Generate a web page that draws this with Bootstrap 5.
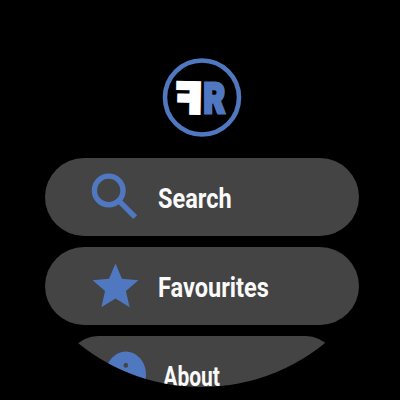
<!DOCTYPE html>
<html lang="en">
<head>
<meta charset="utf-8">
<meta name="viewport" content="width=device-width, initial-scale=1">
<title>Menu</title>
<link href="https://cdn.jsdelivr.net/npm/bootstrap@5.3.0/dist/css/bootstrap.min.css" rel="stylesheet">
<style>
  body { background: #000; font-family: Roboto, "Liberation Sans", sans-serif; }
  /* round watch display */
  .watch { width: 400px; height: 400px; padding: 57px 41.5px 0 45px; background: #000; clip-path: circle(195px at 201.5px 192px); }
  .brand-mark { width: 80px; height: 80px; margin-bottom: 20.5px; margin-left: .7px; }
  .brand-mark text { font: 900 42.5px Roboto, sans-serif; }
  .menu { gap: 10.5px; width: 313.5px; }
  .menu-item { height: 78.5px; padding-left: 39px; border-radius: 39.25px; background: #444; color: #fafafa; }
  .menu-item:hover { color: #fff; }
  .icon-slot { width: 62px; height: 62px; margin-right: 12px; padding-top: 1.5px; color: #5078c0; }
  .menu-label { font-size: 27px; font-weight: 700; line-height: 1; transform: scaleX(.872); transform-origin: left; position: relative; top: 3px; }
  .edge { transform: scaleX(.88); }
  .edge .menu-label { top: 2.5px; transform: scaleX(.885); }
</style>
</head>
<body class="m-0 overflow-hidden">
<main class="watch d-flex flex-column align-items-center overflow-hidden">
  <svg class="brand-mark flex-shrink-0" viewBox="0 0 80 80" role="img" aria-label="FR">
    <circle cx="40" cy="40.5" r="37" fill="none" stroke="#5078c0" stroke-width="4.6"/>
    <text transform="translate(38.9 56.3) rotate(1) scale(-1.04 1)" fill="#fff" stroke="#fff" stroke-width="3.6">F</text>
    <text transform="translate(41.4 56.3) scale(.78 1)" fill="#5078c0" stroke="#5078c0" stroke-width="3.2">R</text>
  </svg>
  <nav class="menu d-flex flex-column flex-shrink-0">
    <a href="#" class="menu-item d-flex align-items-center flex-shrink-0 text-decoration-none">
      <span class="icon-slot d-flex align-items-center justify-content-center flex-shrink-0 pt-0">
        <svg class="flex-shrink-0" width="62" height="62" viewBox="0 0 62 62" fill="none" stroke="currentColor"><circle cx="24.7" cy="24.4" r="14.3" stroke-width="5.4"/><path d="M34.5 34.4 51.2 51.2" stroke-width="5.4"/></svg>
      </span>
      <span class="menu-label">Search</span>
    </a>
    <a href="#" class="menu-item d-flex align-items-center flex-shrink-0 text-decoration-none">
      <span class="icon-slot d-flex align-items-center justify-content-center flex-shrink-0">
        <svg width="55" height="55" viewBox="0 0 24 24" fill="currentColor"><path d="M12 17.27 18.18 21l-1.64-7.03L22 9.24l-7.19-.61L12 2 9.19 8.63 2 9.24l5.46 4.73L5.82 21z"/></svg>
      </span>
      <span class="menu-label">Favourites</span>
    </a>
    <a href="#" class="menu-item edge d-flex align-items-center flex-shrink-0 text-decoration-none">
      <span class="icon-slot d-flex align-items-center justify-content-center flex-shrink-0 pt-0">
        <svg width="55" height="55" viewBox="0 0 24 24"><circle cx="12" cy="12" r="10" fill="currentColor"/><circle cx="12" cy="8" r="1.1" fill="#444"/><path d="M11 11h2v6h-2z" fill="#444"/></svg>
      </span>
      <span class="menu-label">About</span>
    </a>
  </nav>
</main>
<script src="https://cdn.jsdelivr.net/npm/bootstrap@5.3.0/dist/js/bootstrap.bundle.min.js"></script>
</body>
</html>
